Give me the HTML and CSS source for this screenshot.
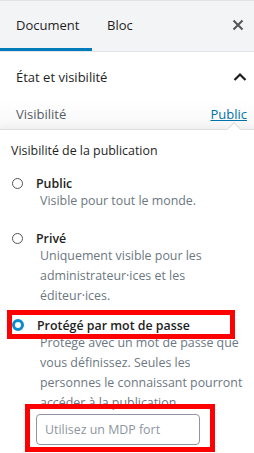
FILE: index.html
```html
<!DOCTYPE html>
<html lang="fr">
<head>
<meta charset="utf-8">
<link rel="stylesheet" href="styles.css">
</head>
<body>
<div class="sidebar">
  <div class="tabs">
    <div class="tab active">Document</div>
    <div class="tab">Bloc</div>
    <div class="close">
      <svg width="12" height="12" viewBox="0 0 12 12"><path d="M1.5 1.5 L10.5 10.5 M10.5 1.5 L1.5 10.5" stroke="#555" stroke-width="2" fill="none"/></svg>
    </div>
  </div>
  <div class="panel-head">
    <span>État et visibilité</span>
    <svg width="14" height="10" viewBox="0 0 14 10"><path d="M1.5 8 L7 2.5 L12.5 8" stroke="#1e1e1e" stroke-width="2.2" fill="none"/></svg>
  </div>
  <div class="vis-row">
    <span class="vis-label">Visibilité</span>
    <a class="vis-link">Public</a>
  </div>
  <div class="popover">
    <div class="tip"></div>
    <div class="pop-title">Visibilité de la publication</div>
    <div class="option first">
      <div class="opt-head"><span class="radio"></span><span class="opt-label">Public</span></div>
      <div class="opt-desc">Visible pour tout le monde.</div>
    </div>
    <div class="option">
      <div class="opt-head"><span class="radio"></span><span class="opt-label">Privé</span></div>
      <div class="opt-desc">Uniquement visible pour les administrateur·ices et les éditeur·ices.</div>
    </div>
    <div class="option">
      <div class="opt-head"><span class="radio checked"></span><span class="opt-label">Protégé par mot de passe</span></div>
      <div class="opt-desc">Protégé avec un mot de passe que vous définissez. Seules les personnes le connaissant pourront accéder à la publication.</div>
      <div class="pw"><span class="placeholder">Utilisez un MDP fort</span></div>
    </div>
  </div>
  <div class="mark mark1"></div>
  <div class="mark mark2"></div>
</div>
</body>
</html>
```
FILE: styles.css
```css
* { box-sizing: border-box; }
html, body { margin: 0; padding: 0; background: #fff; }
body {
  font-family: "Open Sans", "Noto Sans", sans-serif;
  font-size: 12.4px;
  color: #1e1e1e;
  width: 254px;
  height: 453px;
  overflow: hidden;
}
.sidebar { position: relative; width: 254px; height: 453px; overflow: hidden; }
.tabs {
  display: flex;
  align-items: stretch;
  height: 52px;
  background: #f3f4f5;
  border-top: 1px solid #e2e4e7;
  border-bottom: 1px solid #e2e4e7;
}
.tab {
  display: flex;
  align-items: center;
  padding: 0 16px;
  font-size: 13px;
  font-weight: 500;
  color: #1e1e1e;
  border-bottom: 3px solid transparent;
}
.tab.active { border-bottom-color: #007cba; width: 92px; }
.tab + .tab { padding-left: 15px; }
.close { margin-left: auto; display: flex; align-items: center; padding: 0 10px 3px 0; }
.panel-head {
  display: flex;
  justify-content: space-between;
  align-items: center;
  height: 49px;
  padding: 0 7px 0 16px;
  font-weight: 500;
  font-size: 13px;
}
.vis-row {
  display: flex;
  justify-content: space-between;
  align-items: center;
  height: 28px;
  padding: 0 7px 3px 16px;
  font-size: 13px;
  background: linear-gradient(#fff, #f7f7f7);
}
.vis-label { color: #555d66; }
.vis-link { color: #0073aa; text-decoration: underline; }
.popover {
  position: relative;
  background: #fff;
  border-top: 1px solid #dddddd;
  box-shadow: 0 -3px 6px rgba(0,0,0,0.04);
  padding: 11px 8px 0 11px;
}
.tip {
  position: absolute;
  top: -6px;
  left: 229px;
  width: 10px;
  height: 10px;
  background: #fff;
  border-top: 1px solid #dddddd;
  border-left: 1px solid #dddddd;
  transform: rotate(45deg);
}
.pop-title { font-weight: 500; line-height: 20px; margin-bottom: 12px; }
.option { margin-bottom: 9px; }
.option.first { margin-bottom: 17px; }
.opt-head { display: flex; align-items: center; height: 20px; }
.radio {
  width: 11px;
  height: 11px;
  border: 1.5px solid #555;
  border-radius: 50%;
  margin-left: 1px;
  margin-right: 13px;
  flex: none;
}
.radio.checked {
  width: 12px;
  height: 12px;
  border: 3.5px solid #0b8bcf;
  background: #fff;
}
.opt-label { font-weight: 600; color: #1e1e1e; }
.opt-desc {
  color: #6c7781;
  line-height: 20px;
  padding-left: 29px;
  margin-top: -2px;
}
.pw {
  margin: 1px 0 0 25px;
  width: 164px;
  height: 31px;
  border: 1px solid #8d96a0;
  border-radius: 4px;
  display: flex;
  align-items: center;
  padding-left: 8px;
  color: #8d96a0;
}
.mark { position: absolute; border: 5px solid #ff0000; }
.mark1 { left: 7px; top: 310px; width: 228px; height: 29px; }
.mark2 { left: 25px; top: 404px; width: 190px; height: 48px; }
```
